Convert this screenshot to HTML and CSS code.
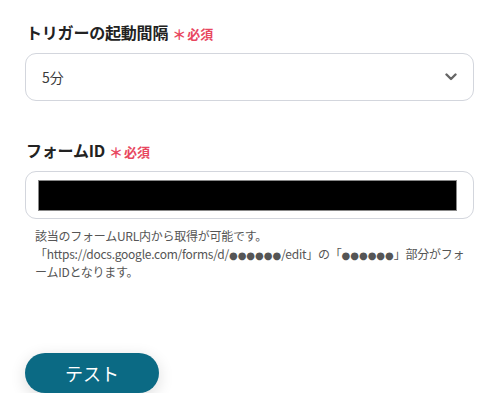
FILE: index.html
```html
<!DOCTYPE html>
<html lang="ja">
<head>
<meta charset="utf-8">
<link rel="stylesheet" href="styles.css">
</head>
<body>
<div class="page">
  <div class="label"><span class="label-text">トリガーの起動間隔</span><span class="req"><span class="ast">＊</span>必須</span></div>
  <div class="select">
    <span class="select-value">5分</span>
    <svg class="chev" width="12" height="8" viewBox="0 0 12 8"><path d="M1.5 1.5 L6 6 L10.5 1.5" fill="none" stroke="#666" stroke-width="2.4" stroke-linecap="round" stroke-linejoin="round"/></svg>
  </div>
  <div class="label label2"><span class="label-text">フォームID</span><span class="req"><span class="ast">＊</span>必須</span></div>
  <div class="input"><div class="mask"></div></div>
  <p class="help">該当のフォームURL内から取得が可能です。<br>「https://docs.google.com/forms/d/<span class="dots">●●●●●●</span>/edit」の「<span class="dots">●●●●●●</span>」部分がフォ<br>ームIDとなります。</p>
  <button class="btn">テスト</button>
</div>
</body>
</html>
```
FILE: styles.css
```css
html, body { margin: 0; padding: 0; background: #fff; }
body { font-family: "Noto Sans CJK JP", "Noto Sans", sans-serif; color: #222; }
.page { padding: 20px 26px 0 25px; display: flex; flex-direction: column; align-items: flex-start; }
.label { height: 24px; display: flex; align-items: center; padding-left: 1px; }
.label-text { font-size: 16px; font-weight: 700; color: #222; letter-spacing: -0.2px; }
.req { color: #e8475f; font-size: 13px; font-weight: 700; margin-left: 4px; display: flex; align-items: center; margin-top: 3px; }
.ast { font-size: 14px; margin-right: 1px; }
.select { margin-top: 9px; width: 449px; height: 48px; box-sizing: border-box; border: 1px solid #d3d6dd; border-radius: 11px; display: flex; align-items: center; justify-content: space-between; padding: 0 16px 0 16px; }
.select-value { font-size: 14px; color: #3a3a3a; }
.chev { display: block; }
.label2 { margin-top: 37px; }
.input { margin-top: 9px; width: 449px; height: 48px; box-sizing: border-box; border: 1px solid #d3d6dd; border-radius: 11px; display: flex; align-items: center; padding: 0 16px 0 12px; }
.mask { width: 419px; height: 31px; background: #000; box-sizing: border-box; border: 1px solid #888; }
.help { margin: 8px 0 0 10px; width: 440px; font-size: 12px; line-height: 18px; color: #555; letter-spacing: -0.25px; white-space: nowrap; }
.dots { font-family: "DejaVu Sans", sans-serif; font-size: 10px; letter-spacing: 0; line-height: 1; }
.btn { margin-top: 72px; width: 134px; height: 40px; border: none; border-radius: 20px; background: #0b6a84; color: #fff; font-family: "Noto Sans CJK JP", sans-serif; font-size: 18px; box-shadow: 0 4px 16px rgba(0,0,0,0.14); padding: 0; }
```
